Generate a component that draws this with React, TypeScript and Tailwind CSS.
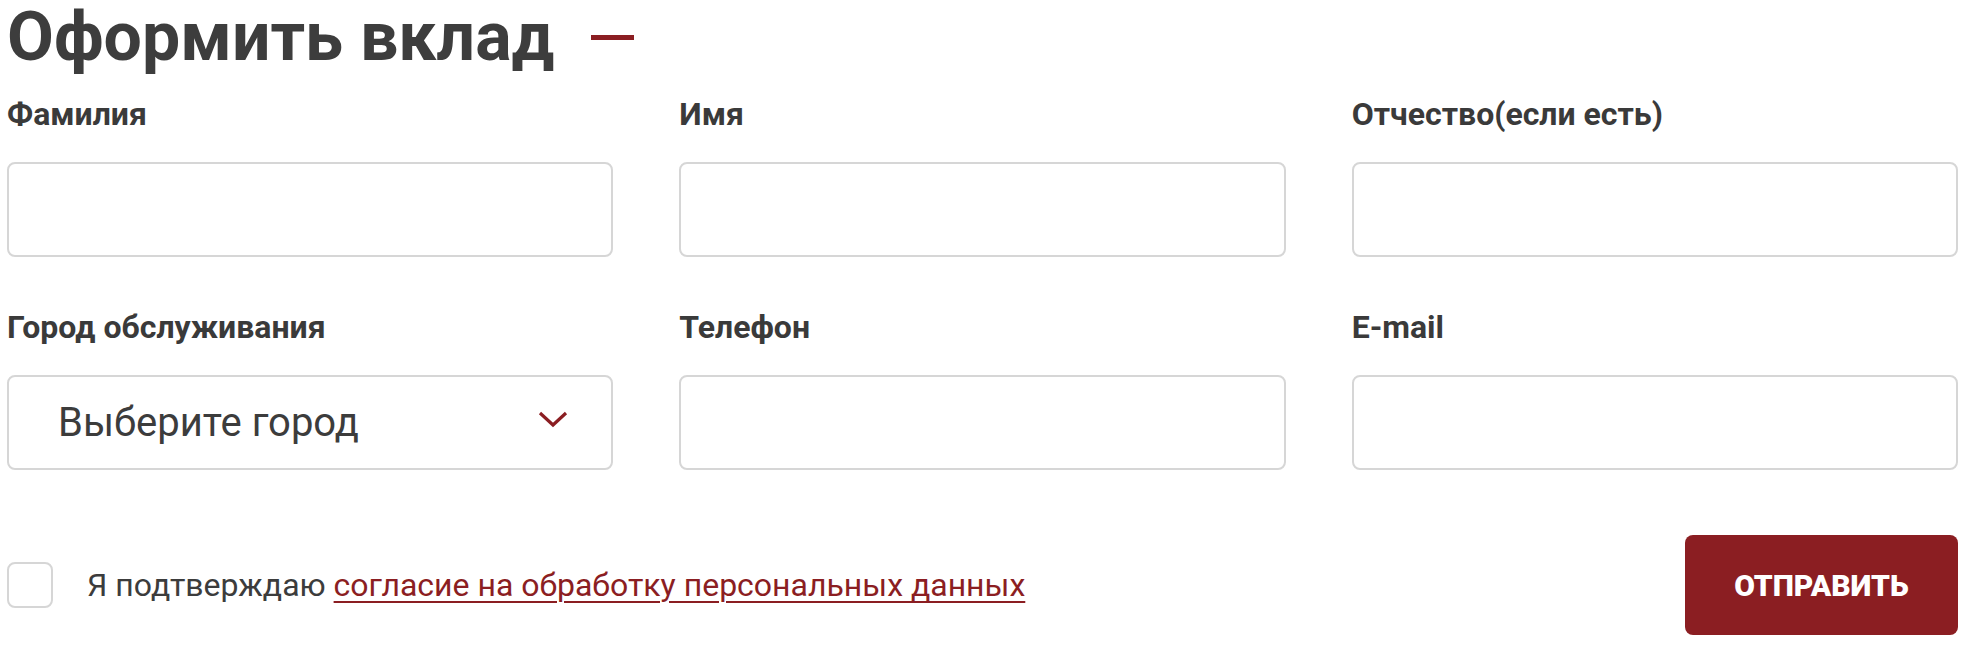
const fields = [
  { label: "Фамилия" },
  { label: "Имя" },
  { label: "Отчество(если есть)" },
  { label: "Город обслуживания", select: true },
  { label: "Телефон" },
  { label: "E-mail" },
];

export default function App() {
  return (
    <div className="min-h-screen bg-white pl-[7px] pr-[10px] font-['Roboto',sans-serif] text-[#3c3c3c]">
      <h1 className="flex items-center text-[68px] font-bold leading-[74px] text-[#3d3d3d]">
        Оформить вклад
        <span className="ml-[36px] h-[5px] w-[43px] bg-[#8b1e22]" />
      </h1>

      <div className="mt-[21px] grid grid-cols-3 gap-x-[66px] gap-y-[51px]">
        {fields.map((f) => (
          <label key={f.label} className="flex flex-col">
            <span className="text-[32px] font-bold leading-[38px] text-[#3a3a3a]">{f.label}</span>
            {f.select ? (
              <div className="mt-[29px] flex h-[95px] items-center justify-between rounded-[8px] border-2 border-[#d6d6d6] pl-[49px] pr-[43px]">
                <span className="text-[40px] leading-[40px] text-[#3c3c3c]">Выберите город</span>
                <svg width="30" height="17" viewBox="0 0 30 17" className="mb-[6px]">
                  <polyline points="2,2 15,14 28,2" fill="none" stroke="#8b1e22" strokeWidth="3.2" />
                </svg>
              </div>
            ) : (
              <input
                type="text"
                className="mt-[29px] h-[95px] rounded-[8px] border-2 border-[#d6d6d6] px-5 text-[30px] outline-none"
              />
            )}
          </label>
        ))}
      </div>

      <div className="mt-[65px] flex items-center justify-between">
        <label className="flex items-center">
          <span className="h-[46px] w-[46px] rounded-[8px] border-2 border-[#d6d6d6]" />
          <span className="ml-[34px] text-[32px] leading-none text-[#3c3c3c]">
            Я подтверждаю{" "}
            <a href="#" className="text-[#8b1e22] underline decoration-2 underline-offset-[5px]">
              согласие на обработку персональных данных
            </a>
          </span>
        </label>
        <button className="h-[100px] w-[273px] rounded-[8px] bg-[#8b1e22] text-[30px] font-black uppercase text-white">
          Отправить
        </button>
      </div>
    </div>
  );
}
